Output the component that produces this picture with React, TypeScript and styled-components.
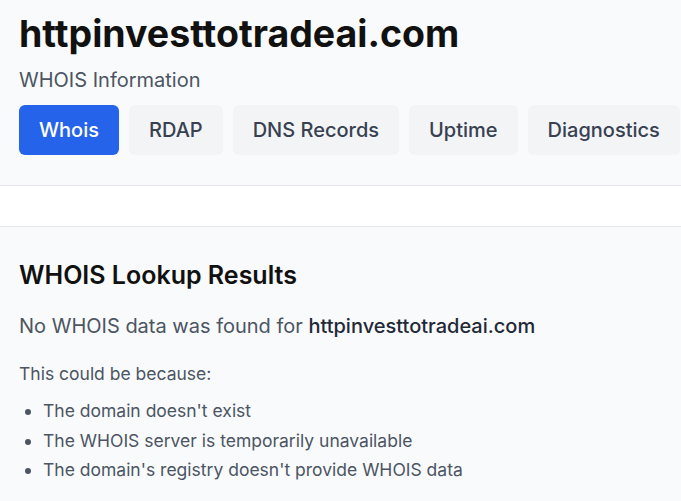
import React from 'react';
import styled, { createGlobalStyle } from 'styled-components';

const GlobalStyle = createGlobalStyle`
  body {
    margin: 0;
    font-family: Inter, "Noto Sans", sans-serif;
    background: #f9fafb;
    color: #111827;
  }
`;

const Header = styled.header`
  background: #f9fafb;
  padding: 12px 19px 30px;
  border-bottom: 1px solid #e5e7eb;
`;

const Title = styled.h1`
  margin: 0;
  font-size: 37.5px;
  line-height: 44px;
  font-weight: 700;
  color: #111111;
`;

const Subtitle = styled.p`
  margin: 10px 0 0;
  font-size: 20px;
  line-height: 28px;
  color: #4b5563;
`;

const Tabs = styled.nav`
  display: flex;
  gap: 10px;
  margin-top: 11px;
  white-space: nowrap;
`;

const Tab = styled.button<{ $active?: boolean }>`
  border: 0;
  border-radius: 6px;
  padding: 10px 20px;
  font-family: inherit;
  font-size: 20px;
  line-height: 30px;
  font-weight: 500;
  cursor: pointer;
  flex-shrink: 0;
  background: ${(p) => (p.$active ? '#2563eb' : '#f3f4f6')};
  color: ${(p) => (p.$active ? '#ffffff' : '#374151')};
`;

const Band = styled.div`
  height: 40px;
  background: #ffffff;
  border-bottom: 1px solid #e5e7eb;
`;

const Results = styled.section`
  padding: 32px 19px 20px;
`;

const ResultsTitle = styled.h2`
  margin: 0;
  font-size: 25px;
  line-height: 32px;
  font-weight: 600;
  color: #111111;
`;

const Message = styled.p`
  margin: 21px 0 0;
  font-size: 20px;
  line-height: 28px;
  color: #4b5563;

  strong {
    font-weight: 550;
    color: #1f2937;
  }
`;

const Note = styled.p`
  margin: 22px 0 0;
  font-size: 17.5px;
  line-height: 24px;
  color: #4b5563;
`;

const Reasons = styled.ul`
  margin: 10px 0 0;
  padding-left: 24px;
  font-size: 17.5px;
  line-height: 29.5px;
  color: #4b5563;
`;

const tabs = ['Whois', 'RDAP', 'DNS Records', 'Uptime', 'Diagnostics'];
const domain = 'httpinvesttotradeai.com';

const App: React.FC = () => (
  <>
    <GlobalStyle />
    <Header>
      <Title>{domain}</Title>
      <Subtitle>WHOIS Information</Subtitle>
      <Tabs>
        {tabs.map((t) => (
          <Tab key={t} $active={t === 'Whois'}>
            {t}
          </Tab>
        ))}
      </Tabs>
    </Header>
    <Band />
    <Results>
      <ResultsTitle>WHOIS Lookup Results</ResultsTitle>
      <Message>
        No WHOIS data was found for <strong>{domain}</strong>
      </Message>
      <Note>This could be because:</Note>
      <Reasons>
        <li>The domain doesn't exist</li>
        <li>The WHOIS server is temporarily unavailable</li>
        <li>The domain's registry doesn't provide WHOIS data</li>
      </Reasons>
    </Results>
  </>
);

export default App;
